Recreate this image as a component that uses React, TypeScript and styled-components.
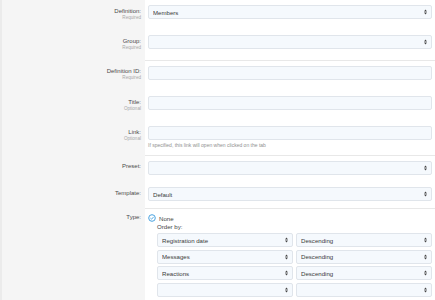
import styled, { createGlobalStyle } from "styled-components";

const Global = createGlobalStyle`
  html, body { margin: 0; padding: 0; background: #fff; }
  body { font-family: "Liberation Sans", Arial, sans-serif; color: #444; }
`;

const Page = styled.div`
  width: 435px;
  min-height: 300px;
  border-left: 2px solid #ebebeb;
  box-sizing: border-box;
  background: linear-gradient(to right, #f5f5f5 143px, #fff 143px);
`;

const Group = styled.div<{ $sep?: boolean }>`
  display: flex;
  flex-direction: column;
  & > div > :last-child {
    border-top: ${({ $sep }) => ($sep ? "1px solid #e8e8e8" : "none")};
  }
`;

const Row = styled.div`
  display: flex;
  align-items: stretch;
  & + & > :last-child { border-top: none !important; }
`;

const Label = styled.div<{ $top?: number }>`
  width: 143px;
  box-sizing: border-box;
  padding: ${({ $top }) => $top ?? 7}px 4px 0 0;
  text-align: right;
  flex-shrink: 0;
`;

const LabelText = styled.div`
  font-size: 6px;
  line-height: 8px;
  color: #4a4a4a;
`;

const SubLabel = styled.div`
  font-size: 4.6px;
  line-height: 6px;
  color: #a8a8a8;
`;

const Field = styled.div<{ $tall?: boolean; $hint?: boolean }>`
  flex: 1;
  padding: 5px 3px ${({ $hint }) => ($hint ? 0 : 7)}px 3px;
  min-height: ${({ $tall }) => ($tall ? "18px" : "14px")};
  background: #fff;
`;

const Box = styled.div`
  height: 14px;
  box-sizing: border-box;
  border: 1px solid #e0e5eb;
  border-radius: 2px;
  background: #f5f9fd;
  display: flex;
  align-items: center;
  padding: 0 4px;
  font-size: 6.1px;
  color: #3a3a3a;
`;

const BoxText = styled.span`
  flex: 1;
  white-space: nowrap;
  overflow: hidden;
`;

const Hint = styled.div`
  font-size: 5px;
  line-height: 7px;
  color: #8f8f8f;
  margin-top: 2px;
  padding-bottom: 6px;
`;

const Radio = styled.div`
  display: flex;
  align-items: center;
  gap: 3px;
  font-size: 6.1px;
  height: 8px;
`;

const OrderBlock = styled.div`
  padding-left: 9px;
`;

const OrderTitle = styled.div`
  font-size: 6.1px;
  line-height: 8px;
  margin: 1px 0 2px;
`;

const OrderGrid = styled.div`
  display: grid;
  grid-template-columns: 1fr 1fr;
  gap: 2.5px 3px;
`;

const Arrows = () => (
  <svg width="3" height="6" viewBox="0 0 3 6">
    <path d="M1.5 0.5 L3 2.4 L0 2.4 Z M1.5 5.5 L3 3.6 L0 3.6 Z" fill="#444" />
  </svg>
);

const Select = ({ value = "" }: { value?: string }) => (
  <Box>
    <BoxText>{value}</BoxText>
    <Arrows />
  </Box>
);

const Check = () => (
  <svg width="8" height="8" viewBox="0 0 8 8">
    <circle cx="4" cy="4" r="3.3" fill="none" stroke="#4aa3e0" strokeWidth="1" />
    <path d="M2.4 4.1 L3.6 5.2 L5.6 2.9" fill="none" stroke="#4aa3e0" strokeWidth="0.9" />
  </svg>
);

const FormRow = ({ label, sub, children }: { label: string; sub?: string; children: React.ReactNode }) => (
  <Row>
    <Label>
      <LabelText>{label}</LabelText>
      {sub && <SubLabel>{sub}</SubLabel>}
    </Label>
    <Field $tall={!!sub}>{children}</Field>
  </Row>
);

const orders = [
  ["Registration date", "Descending"],
  ["Messages", "Descending"],
  ["Reactions", "Descending"],
  ["", ""],
];

export default function App() {
  return (
    <>
      <Global />
      <Page>
        <Group>
          <FormRow label="Definition:" sub="Required"><Select value="Members" /></FormRow>
          <FormRow label="Group:" sub="Required"><Select /></FormRow>
        </Group>
        <Group $sep>
          <FormRow label="Definition ID:" sub="Required"><Box /></FormRow>
          <FormRow label="Title:" sub="Optional"><Box /></FormRow>
          <Row>
            <Label>
              <LabelText>Link:</LabelText>
              <SubLabel>Optional</SubLabel>
            </Label>
            <Field $hint>
              <Box />
              <Hint>If specified, this link will open when clicked on the tab</Hint>
            </Field>
          </Row>
        </Group>
        <Group $sep>
          <FormRow label="Preset:"><Select /></FormRow>
          <FormRow label="Template:"><Select value="Default" /></FormRow>
        </Group>
        <Group $sep>
          <Row>
            <Label $top={5}>
              <LabelText>Type:</LabelText>
            </Label>
            <Field>
              <Radio><Check />None</Radio>
              <OrderBlock>
                <OrderTitle>Order by:</OrderTitle>
                <OrderGrid>
                  {orders.map(([a, b], i) => [
                    <Select key={"a" + i} value={a} />,
                    <Select key={"b" + i} value={b} />,
                  ])}
                </OrderGrid>
              </OrderBlock>
            </Field>
          </Row>
        </Group>
      </Page>
    </>
  );
}
